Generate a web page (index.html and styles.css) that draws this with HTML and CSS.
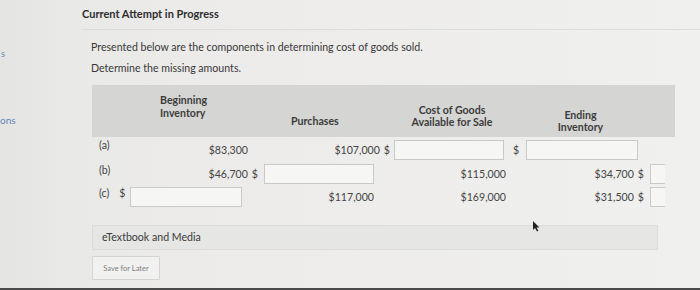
FILE: index.html
```html
<!DOCTYPE html>
<html lang="en">
<head>
<meta charset="utf-8">
<title>Current Attempt in Progress</title>
<link rel="stylesheet" href="styles.css">
</head>
<body>
<div class="screen">
  <aside class="side">
    <span class="side-mark">s</span>
    <span class="side-link">ons</span>
  </aside>
  <main class="main">
    <h1 class="title">Current Attempt in Progress</h1>
    <div class="content">
      <p class="text">Presented below are the components in determining cost of goods sold.</p>
      <p class="text">Determine the missing amounts.</p>

      <div class="grid">
        <div class="head">
          <div class="hc"></div>
          <div class="hc hc-begin">Beginning<br>Inventory</div>
          <div class="hc hc-purch">Purchases</div>
          <div class="hc hc-cogs">Cost of Goods<br>Available for Sale</div>
          <div class="hc hc-end">Ending<br>Inventory</div>
        </div>

        <div class="row row-a">
          <div class="c c-label">(a)</div>
          <div class="c c-num c-begin">$83,300</div>
          <div class="c c-num c-purch">$107,000 <span class="dol">$</span></div>
          <div class="c c-cogs"><span class="field field-wide"></span></div>
          <div class="c c-end"><span class="dol dol-lone">$</span><span class="field field-end"></span></div>
        </div>

        <div class="row row-b">
          <div class="c c-label">(b)</div>
          <div class="c c-num c-begin">$46,700 <span class="dol">$</span></div>
          <div class="c c-purch"><span class="field field-purch"></span></div>
          <div class="c c-num c-cogs">$115,000</div>
          <div class="c c-num c-end">$34,700 <span class="dol">$</span><span class="field field-small"></span></div>
        </div>

        <div class="row row-c">
          <div class="c c-label">(c) <span class="dol dol-c">$</span></div>
          <div class="c c-begin"><span class="field field-begin"></span></div>
          <div class="c c-num c-purch">$117,000</div>
          <div class="c c-num c-cogs">$169,000</div>
          <div class="c c-num c-end">$31,500 <span class="dol">$</span><span class="field field-small"></span></div>
        </div>
      </div>

      <div class="media">eTextbook and Media</div>
      <button class="save" type="button">Save for Later</button>
    </div>
  </main>
</div>
<span class="cursor"><svg width="8" height="11" viewBox="0 0 8 11"><path d="M1 0 L1 9 L3 7 L5 10.5 L6.3 9.8 L4.5 6.6 L7.4 6.4 Z" fill="#222"/></svg></span>
</body>
</html>
```

FILE: styles.css
```css
html, body {
  margin: 0;
  padding: 0;
}
body {
  width: 700px;
  height: 290px;
  overflow: hidden;
  background: #ecebe9;
  font-family: Lato, "Open Sans", "Liberation Sans", sans-serif;
  color: #3a3a3a;
  position: relative;
}
.screen {
  display: flex;
  height: 288px;
  border-bottom: 2px solid #4a4a4a;
  background: linear-gradient(90deg, #e4e4e2 0, #e9e9e7 60px, #ecebe9 200px, #f0f0ee 700px);
}
.side {
  width: 80px;
  flex: none;
  display: flex;
  flex-direction: column;
  padding-top: 49px;
  box-sizing: border-box;
}
.side-mark {
  font-size: 9px;
  color: #5c85bd;
  padding-left: 1px;
  line-height: 10px;
}
.side-link {
  margin-top: 55px;
  font-size: 10px;
  color: #5c85bd;
  line-height: 12px;
}
.main {
  flex: 1;
  padding-left: 2px;
}
.title {
  margin: 0;
  padding: 6px 0 8px 0;
  font-size: 11px;
  font-weight: 700;
  color: #2e2e2e;
  line-height: 15px;
  border-bottom: 1px solid #dcdcda;
}
.content {
  padding-left: 9px;
}
.text {
  margin: 11px 0 0 0;
  font-size: 10.6px;
  line-height: 13px;
  color: #383838;
}
.text + .text {
  margin-top: 8px;
}
.grid {
  margin-top: 10px;
  margin-left: 1px;
  width: 583px;
}
.head, .row {
  display: grid;
  grid-template-columns: 36px 134px 130px 120px 163px;
}
.head {
  background: #d5d5d3;
  height: 52px;
  align-items: center;
}
.hc {
  font-size: 10.6px;
  font-weight: 700;
  line-height: 12.5px;
  color: #3c3c3c;
}
.hc-begin {
  padding-left: 32px;
  align-self: start;
  padding-top: 9px;
}
.hc-purch {
  padding-left: 29px;
  padding-top: 20px;
}
.hc-cogs {
  text-align: center;
  padding-top: 10px;
}
.hc-end {
  text-align: center;
  padding-top: 20px;
  padding-right: 26px;
}
.row {
  height: 23px;
  align-items: center;
}
.c {
  font-size: 10.6px;
  color: #444;
  display: flex;
  align-items: center;
  white-space: nowrap;
}
.c-label {
  padding-left: 7px;
  align-self: start;
  padding-top: 2px;
}
.c-num {
  justify-content: flex-end;
}
.dol {
  margin-left: 4px;
}
.dol-c {
  margin-left: 10px;
}
.c-begin.c-num {
  padding-right: 14px;
}
.row-b .c-begin.c-num {
  padding-right: 4px;
}
.c-purch.c-num {
  padding-right: 2px;
}
.row-c .c-purch.c-num {
  padding-right: 18px;
}
.c-cogs.c-num {
  padding-right: 6px;
}
.c-end.c-num {
  padding-right: 10px;
}
.field {
  display: inline-block;
  height: 20px;
  border: 1px solid #c9c9c7;
  background: #f6f6f4;
  box-sizing: border-box;
}
.field-wide {
  width: 110px;
  margin-left: 2px;
}
.field-purch {
  width: 110px;
  margin-left: 2px;
}
.field-begin {
  width: 112px;
  margin-left: 2px;
}
.field-end {
  width: 112px;
  margin-left: 7px;
}
.field-small {
  width: 15px;
  margin-left: 6px;
  border-right: none;
}
.dol-lone {
  margin-left: 0;
}
.row-a .c-end {
  padding-left: 1px;
}
.row-a {
  height: 25px;
}
.media {
  margin-top: 17px;
  margin-left: 1px;
  width: 566px;
  height: 25px;
  box-sizing: border-box;
  border: 1px solid #dcdcda;
  background: #e6e6e4;
  font-size: 10.6px;
  line-height: 23px;
  padding-left: 9px;
  color: #3a3a3a;
}
.save {
  display: block;
  margin: 6px 0 0 1px;
  height: 24px;
  width: 68px;
  border: 1px solid #d4d4d2;
  background: #f1f1ef;
  font-family: Lato, "Open Sans", "Liberation Sans", sans-serif;
  font-size: 7.5px;
  color: #808080;
  padding: 0;
  border-radius: 1px;
}
.cursor {
  position: absolute;
  left: 532px;
  top: 221px;
  line-height: 0;
}
```
